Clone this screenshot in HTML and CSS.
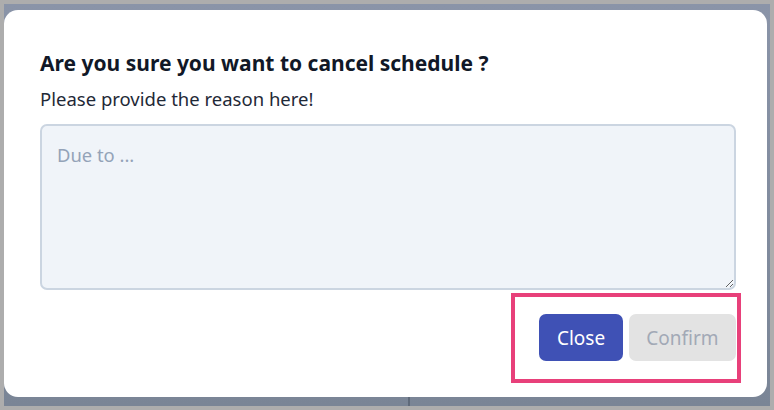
FILE: index.html
```html
<!DOCTYPE html>
<html>
<head>
<meta charset="utf-8">
<link rel="stylesheet" href="styles.css">
</head>
<body>
<div class="backdrop">
  <div class="bgline"></div>
  <div class="modal">
    <h2 class="title">Are you sure you want to cancel schedule ?</h2>
    <p class="subtitle">Please provide the reason here!</p>
    <textarea class="reason" placeholder="Due to ..."></textarea>
    <div class="footer">
      <div class="actions">
        <button class="btn btn-primary">Close</button>
        <button class="btn btn-disabled" disabled>Confirm</button>
      </div>
    </div>
  </div>
</div>
</body>
</html>
```
FILE: styles.css
```css
html, body {
  margin: 0;
  padding: 0;
}
body {
  background: #adadad;
  width: 774px;
  height: 410px;
  overflow: hidden;
  font-family: "Noto Sans", "Open Sans", sans-serif;
}
.backdrop {
  position: relative;
  margin: 4px 4px 0 4px;
  height: 402px;
  background: linear-gradient(#8a94a8, #7a8596);
  padding-top: 6px;
  box-sizing: border-box;
}
.bgline {
  position: absolute;
  left: 404px;
  top: 390px;
  width: 2px;
  height: 12px;
  background: #5f6a7a;
}
.modal {
  position: relative;
  width: 763px;
  height: 387px;
  background: #ffffff;
  border-radius: 14px;
  box-sizing: border-box;
  padding: 39px 31px 0 36px;
  display: flex;
  flex-direction: column;
}
.title {
  margin: 0;
  font-size: 21px;
  font-weight: 700;
  line-height: 28px;
  color: #111827;
}
.subtitle {
  margin: 9px 0 0 0;
  font-size: 18.5px;
  line-height: 26px;
  color: #1f2937;
}
.reason {
  margin-top: 12px;
  width: 696px;
  height: 166px;
  box-sizing: border-box;
  border: 2px solid #cbd5e1;
  border-radius: 7px;
  background: #f0f4f9;
  padding: 16px 15px;
  font-family: inherit;
  font-size: 18.4px;
  line-height: 26px;
  color: #334155;
  outline: none;
}
.reason::placeholder {
  color: #94a3b8;
}
.footer {
  display: flex;
  justify-content: flex-end;
  margin-top: 3px;
  margin-right: -5px;
}
.actions {
  display: flex;
  gap: 6px;
  border: 4px solid #e8407a;
  padding: 17px 1px 18px 24px;
}
.btn {
  height: 47px;
  border: none;
  border-radius: 7px;
  font-family: inherit;
  font-size: 19px;
  padding: 0;
}
.btn-primary {
  width: 84px;
  background: #3f51b5;
  color: #ffffff;
}
.btn-disabled {
  width: 107px;
  background: #e3e3e3;
  color: #a2a9b6;
}
```
